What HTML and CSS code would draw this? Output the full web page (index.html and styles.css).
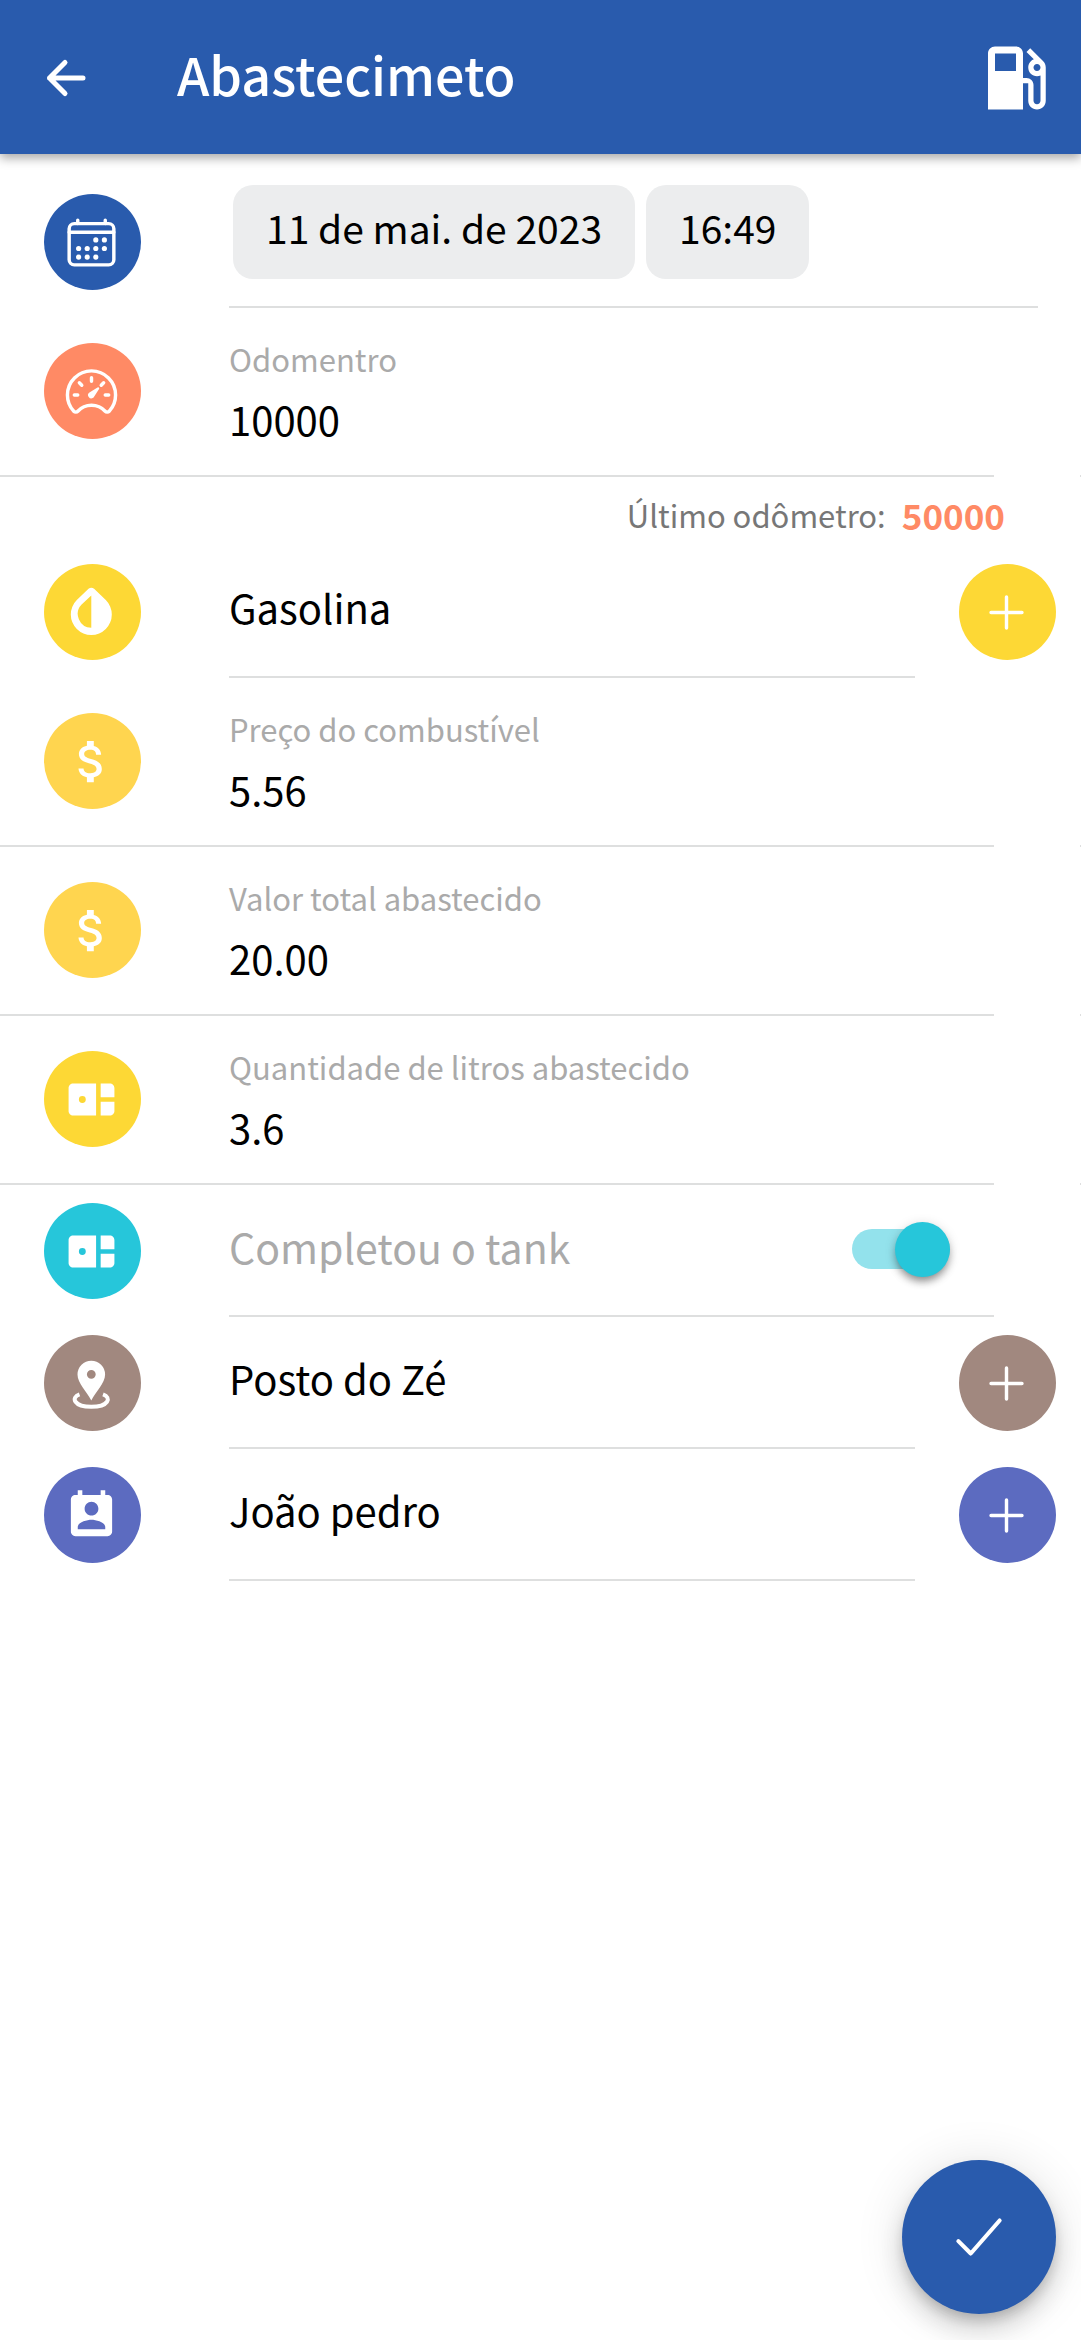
FILE: index.html
```html
<!DOCTYPE html>
<html lang="pt-BR">
<head>
<meta charset="utf-8">
<meta name="viewport" content="width=device-width, initial-scale=1">
<title>Abastecimeto</title>
<link rel="stylesheet" href="styles.css">
</head>
<body>
<svg class="defs" aria-hidden="true">
  <symbol id="plus" viewBox="0 0 512 512"><path class="line" d="M256 112v288M400 256H112"/></symbol>
  <symbol id="money" viewBox="0 0 24 24"><path d="M11.8 10.9c-2.27-.59-3-1.2-3-2.15 0-1.09 1.01-1.85 2.7-1.85 1.78 0 2.44.85 2.5 2.1h2.21c-.07-1.72-1.12-3.3-3.21-3.81V3h-3v2.16c-1.94.42-3.5 1.68-3.5 3.61 0 2.31 1.91 3.46 4.7 4.13 2.5.6 3 1.48 3 2.41 0 .69-.49 1.79-2.7 1.79-2.06 0-2.87-.92-2.98-2.1h-2.2c.12 2.19 1.76 3.42 3.68 3.83V21h3v-2.15c1.95-.37 3.5-1.5 3.5-3.55 0-2.84-2.43-3.81-4.7-4.4z"/></symbol>
  <symbol id="bento" viewBox="0 0 24 24"><path fill-rule="evenodd" d="M16 13h6v4c0 1.1-.9 2-2 2h-4v-6zM20 5h-4v6h6V7c0-1.1-.9-2-2-2zM2 7v10c0 1.1.9 2 2 2h10V5H4c-1.1 0-2 .9-2 2zM9.5 12a1.5 1.5 0 1 1-3 0 1.5 1.5 0 0 1 3 0z"/></symbol>
</svg>

<header class="toolbar">
  <button class="back" type="button" aria-label="Voltar">
    <svg viewBox="0 0 48 48"><path d="M22 8.500 6.500 24 22 39.500M6.500 24H40"/></svg>
  </button>
  <h1>Abastecimeto</h1>
  <svg class="pump" viewBox="0 0 24 24" aria-hidden="true"><path d="M19.77 7.23l.01-.01-3.72-3.72L15 4.56l2.11 2.11c-.94.36-1.61 1.26-1.61 2.33 0 1.38 1.12 2.5 2.5 2.5.36 0 .69-.08 1-.21v7.21c0 .55-.45 1-1 1s-1-.45-1-1V14c0-1.1-.9-2-2-2h-1V5c0-1.1-.9-2-2-2H6c-1.1 0-2 .9-2 2v16h10v-7.5h1.5v5c0 1.38 1.12 2.5 2.5 2.5s2.5-1.12 2.5-2.5V9c0-.69-.28-1.32-.73-1.77zM12 10H6V5h6v5zm6 0c-.55 0-1-.45-1-1s.45-1 1-1 1 .45 1 1-.45 1-1 1z"/></svg>
</header>

<main>
  <form class="form">
    <div class="row row-date">
      <span class="badge blue"><svg viewBox="0 0 512 512"><rect class="line" x="48" y="80" width="416" height="384" rx="48"/><circle cx="296" cy="232" r="24"/><circle cx="376" cy="232" r="24"/><circle cx="296" cy="312" r="24"/><circle cx="376" cy="312" r="24"/><circle cx="136" cy="312" r="24"/><circle cx="216" cy="312" r="24"/><circle cx="136" cy="392" r="24"/><circle cx="216" cy="392" r="24"/><circle cx="296" cy="392" r="24"/><path class="line" d="M128 48v32M384 48v32M464 160H48"/></svg></span>
      <div class="body chips">
        <button class="chip" type="button">11 de mai. de 2023</button>
        <button class="chip" type="button">16:49</button>
      </div>
    </div>

    <div class="row row-field">
      <div class="field">
        <span class="badge orange"><svg viewBox="0 0 512 512"><path d="M326.1 231.900l-47.500 75.500a31 31 0 01-7 7 30.110 30.110 0 01-35-49l75.500-47.500a10.230 10.230 0 0111.700 0 10.060 10.060 0 012.300 14z"/><path class="line" d="M256 64C132.300 64 32 164.200 32 287.900a223.180 223.180 0 0056.300 148.500c1.100 1.200 2.100 2.400 3.200 3.500a25.190 25.190 0 0037.100-.1 173.130 173.130 0 01254.800 0 25.190 25.190 0 0037.100.1l3.200-3.500A223.180 223.180 0 00480 287.900C480 164.200 379.700 64 256 64z"/><path class="line" d="M256 128v32M416 288h-32M128 288H96M165.490 197.490l-22.630-22.630M346.510 197.490l22.630-22.630"/></svg></span>
        <div class="body">
          <label for="odometer">Odomentro</label>
          <input id="odometer" type="text" inputmode="numeric" value="10000">
        </div>
      </div>
    </div>

    <p class="hint">Último odômetro: <strong>50000</strong></p>

    <div class="row row-select">
      <span class="badge yellow"><svg viewBox="0 0 55 55"><path fill-rule="evenodd" d="M12.800 15 24.500 3.800q2.800-2.200 5.600 0L41.800 15A20.500 20.500 0 1 1 12.800 15ZM27.300 10.500 17.600 19.500A13.800 13.800 0 0 0 27.300 42.800Z"/></svg></span>
      <div class="body">
        <select aria-label="Combustível"><option>Gasolina</option></select>
      </div>
      <button class="badge yellow" type="button" aria-label="Adicionar combustível"><svg><use href="#plus"/></svg></button>
    </div>

    <div class="row row-field">
      <div class="field">
        <span class="badge amber"><svg><use href="#money"/></svg></span>
        <div class="body">
          <label for="price">Preço do combustível</label>
          <input id="price" type="text" inputmode="decimal" value="5.56">
        </div>
      </div>
    </div>

    <div class="row row-field">
      <div class="field">
        <span class="badge amber"><svg><use href="#money"/></svg></span>
        <div class="body">
          <label for="total">Valor total abastecido</label>
          <input id="total" type="text" inputmode="decimal" value="20.00">
        </div>
      </div>
    </div>

    <div class="row row-field">
      <div class="field">
        <span class="badge yellow"><svg><use href="#bento"/></svg></span>
        <div class="body">
          <label for="liters">Quantidade de litros abastecido</label>
          <input id="liters" type="text" inputmode="decimal" value="3.6">
        </div>
      </div>
    </div>

    <div class="row row-toggle">
      <span class="badge cyan"><svg><use href="#bento"/></svg></span>
      <div class="body">
        <label for="full">Completou o tank</label>
        <input id="full" class="switch" type="checkbox" role="switch" checked>
      </div>
    </div>

    <div class="row row-select">
      <span class="badge brown"><svg viewBox="0 0 55 55"><path fill-rule="evenodd" d="M27.300 44.500C23 36 13.500 27 13.500 18.500a13.800 13.800 0 0 1 27.600 0C41.100 27 31.600 36 27.300 44.500ZM31.700 18.300a4.400 4.400 0 1 0-8.800 0 4.400 4.400 0 0 0 8.800 0Z"/><path class="ring" d="M15.500 38.300C6.500 41.500 10 50.800 27.300 50.800S48 41.500 39 38.300"/></svg></span>
      <div class="body">
        <select aria-label="Posto"><option>Posto do Zé</option></select>
      </div>
      <button class="badge brown" type="button" aria-label="Adicionar posto"><svg><use href="#plus"/></svg></button>
    </div>

    <div class="row row-select">
      <span class="badge indigo"><svg viewBox="0 0 24 24"><path d="M19 3h-1V1h-2v2H8V1H6v2H5c-1.110 0-2 .9-2 2v14c0 1.100.89 2 2 2h14c1.100 0 2-.9 2-2V5c0-1.100-.9-2-2-2zm-7 3c1.660 0 3 1.340 3 3s-1.340 3-3 3-3-1.340-3-3 1.340-3 3-3zm6 12H6v-1c0-2 4-3.100 6-3.100s6 1.100 6 3.100v1z"/></svg></span>
      <div class="body">
        <select aria-label="Motorista"><option>João pedro</option></select>
      </div>
      <button class="badge indigo" type="button" aria-label="Adicionar motorista"><svg><use href="#plus"/></svg></button>
    </div>

    <button class="fab" type="submit" aria-label="Salvar"><svg viewBox="0 0 512 512"><path class="line" d="M416 128 192 384 96 288"/></svg></button>
  </form>
</main>
</body>
</html>
```
FILE: styles.css
```css
:root {
  --blue: #295bad;
  --orange: #ff8a65;
  --yellow: #fdd835;
  --amber: #ffd54f;
  --cyan: #26c6da;
  --brown: #a1887f;
  --indigo: #5c6bc0;
  --rule: #dedfdf;
  --muted: #aaa;
}

* {
  box-sizing: border-box;
}

body {
  margin: 0;
  background: #fff;
  color: #000;
  font-family: "Noto Sans CJK JP", "Noto Sans", sans-serif;
  font-size: 40px;
  font-weight: 400;
  line-height: 60px;
}

button,
input,
select {
  margin: 0;
  padding: 0;
  border: 0;
  background: none;
  color: inherit;
  font: inherit;
}

.defs {
  display: none;
}

.line {
  fill: none;
  stroke: currentColor;
  stroke-width: 32px;
  stroke-linecap: round;
  stroke-linejoin: round;
}

/* Toolbar */
.toolbar {
  display: flex;
  align-items: center;
  height: 154px;
  padding: 2px 23px 0 43px;
  background: var(--blue);
  color: #fff;
  box-shadow: 0 4px 10px rgba(0, 0, 0, 0.35);
}

.back {
  width: 48px;
  height: 48px;
}

.back svg {
  display: block;
  fill: none;
  stroke: currentColor;
  stroke-width: 5px;
  stroke-linecap: round;
  stroke-linejoin: round;
}

.toolbar h1 {
  flex: 1;
  margin: 0 0 0 86px;
  padding-bottom: 8px;
  font-size: 52px;
  font-weight: 500;
}

.pump {
  width: 84px;
  height: 84px;
  fill: currentColor;
}

/* Rows */
.row {
  display: flex;
  align-items: stretch;
}

.badge {
  display: grid;
  place-items: center;
  flex: none;
  width: 97px;
  height: 96px;
  padding-right: 2px;
  border-radius: 50%;
  color: #fff;
}

.badge svg {
  width: 55px;
  height: 55px;
  fill: currentColor;
}

.badge .ring {
  fill: none;
  stroke: currentColor;
  stroke-width: 4px;
}

.blue { background: var(--blue); }
.orange { background: var(--orange); }
.yellow { background: var(--yellow); }
.amber { background: var(--amber); }
.cyan { background: var(--cyan); }
.brown { background: var(--brown); }
.indigo { background: var(--indigo); }

.body {
  flex: 1;
  min-width: 0;
  margin-left: 88px;
}

.row-date,
.row-select,
.row-toggle,
.field {
  padding-left: 44px;
}

.row-date .body,
.row-select .body,
.row-toggle .body,
.field,
.row-field::after {
  border-bottom: 2px solid var(--rule);
}

.row-date {
  height: 154px;
  padding-right: 43px;
}

.row-date .badge {
  margin-top: 40px;
}

.chips {
  display: flex;
  align-items: flex-start;
  gap: 11px;
  padding: 31px 4px 0;
}

.chip {
  height: 94px;
  padding: 0 33px 10px;
  border-radius: 20px;
  background: #ecedee;
  font-size: 39px;
}

.row-field {
  height: 169px;
  justify-content: space-between;
}

.field {
  display: flex;
  flex: 1;
  margin-right: 86px;
}

.row-field::after {
  content: "";
  width: 1px;
}

.field .badge {
  margin-top: 35px;
}

.field .body {
  display: flex;
  flex-direction: column;
  gap: 10px;
  padding-top: 31px;
}

.field label {
  color: var(--muted);
  font-size: 31px;
  line-height: 40px;
}

.field input {
  width: 100%;
  height: 60px;
}

.hint {
  display: flex;
  align-items: center;
  justify-content: flex-end;
  gap: 16px;
  height: 69px;
  margin: 0;
  padding: 6px 76px 0 0;
  color: #777;
  font-size: 31px;
}

.hint strong {
  color: var(--orange);
  font-size: 35px;
}

.row-select,
.row-toggle {
  height: 132px;
}

.row-select .badge,
.row-toggle .badge {
  margin-top: 18px;
}

.row-select {
  padding-right: 25px;
}

.row-select .body {
  margin-right: 44px;
  padding-top: 31px;
}

.row-select select {
  display: block;
  width: 100%;
  height: 60px;
  appearance: none;
}

.row-toggle .body {
  display: flex;
  align-items: flex-start;
  justify-content: space-between;
  margin-right: 87px;
  padding: 31px 44px 0 0;
}

.row-toggle label {
  color: var(--muted);
  font-size: 41px;
}

/* Switch */
.switch {
  display: flex;
  align-items: center;
  width: 98px;
  height: 40px;
  margin-top: 13px;
  border-radius: 20px;
  background: #93e2ec;
  appearance: none;
}

.switch::before {
  content: "";
  width: 55px;
  height: 55px;
  border-radius: 50%;
  background: #fff;
  box-shadow: 0 6px 8px -2px rgba(0, 0, 0, 0.4), 0 2px 12px rgba(0, 0, 0, 0.15);
}

.switch:checked {
  justify-content: flex-end;
}

.switch:checked::before {
  background: var(--cyan);
}

.fab {
  position: fixed;
  right: 25px;
  bottom: 26px;
  display: grid;
  place-items: center;
  width: 154px;
  height: 154px;
  border-radius: 50%;
  background: var(--blue);
  color: #fff;
  box-shadow: 0 8px 14px -3px rgba(0, 0, 0, 0.2), 0 16px 28px rgba(0, 0, 0, 0.14), 0 3px 50px rgba(0, 0, 0, 0.12);
}

.fab svg {
  width: 66px;
  height: 66px;
}
```
